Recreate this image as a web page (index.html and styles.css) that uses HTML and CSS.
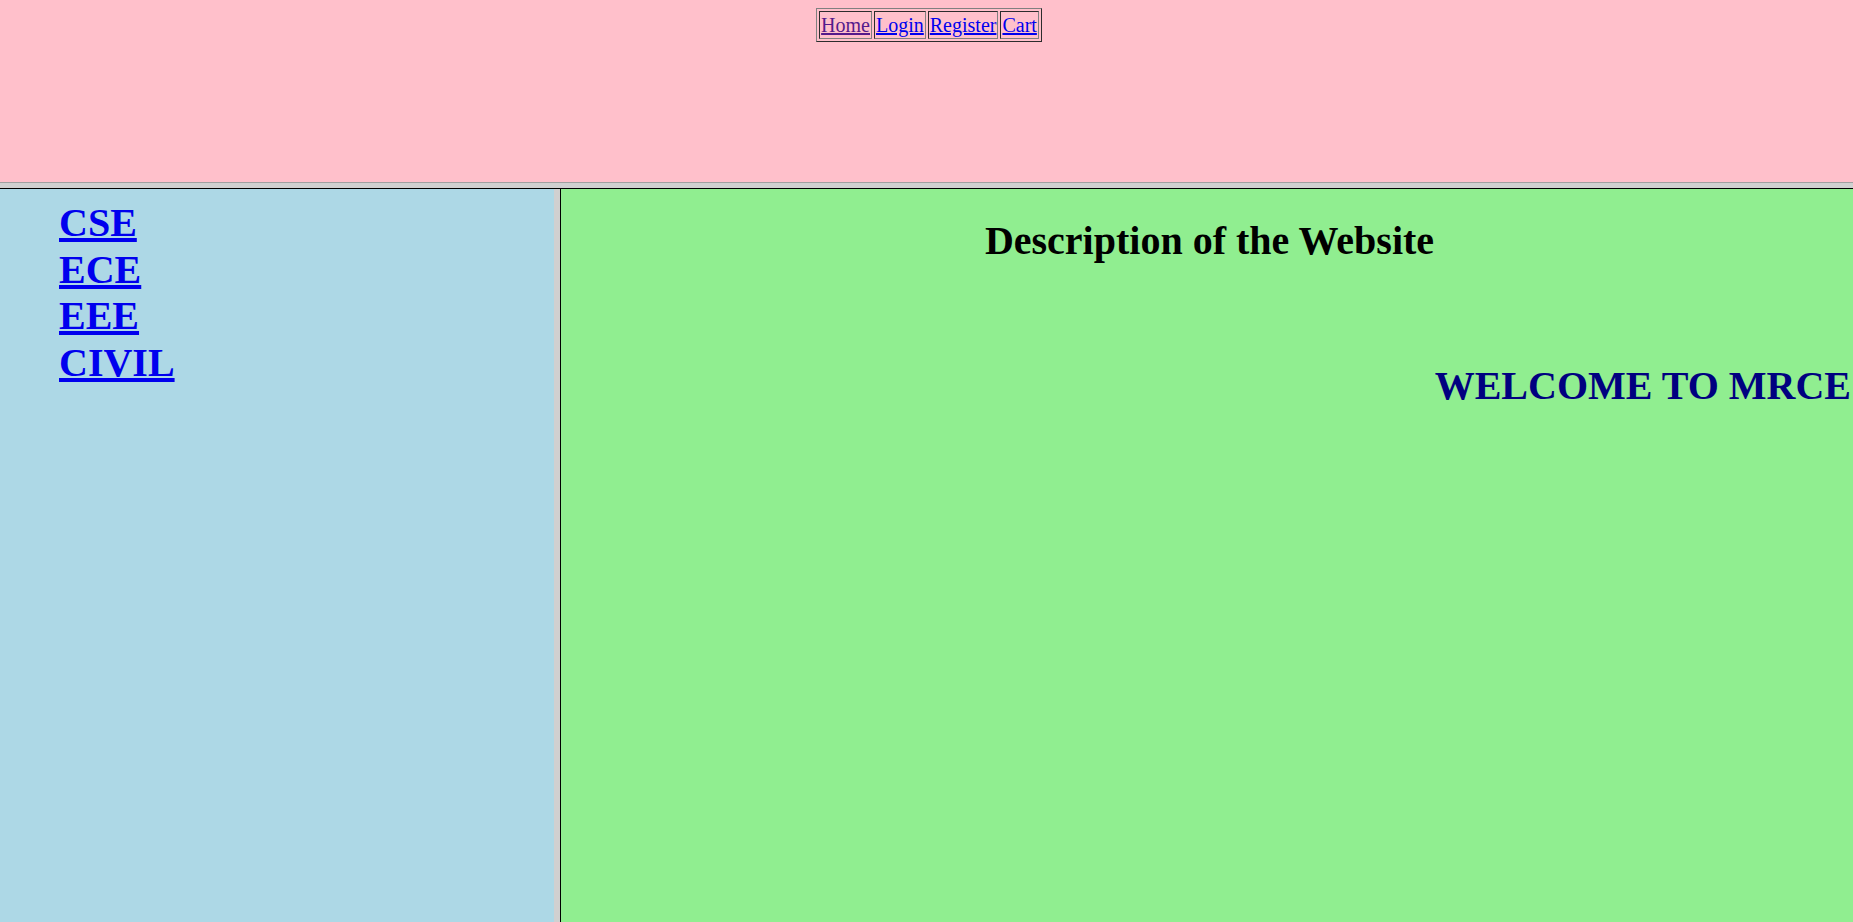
FILE: index.html
```html
<!DOCTYPE html>
<html>
<head>
<meta charset="utf-8">
<title>MRCE</title>
<link rel="stylesheet" href="styles.css">
</head>
<body>
<div class="page">
  <header class="top">
    <table class="nav">
      <tr>
        <td class="nav-cell"><a class="nav-link visited" href="#">Home</a></td>
        <td class="nav-cell"><a class="nav-link" href="#">Login</a></td>
        <td class="nav-cell"><a class="nav-link" href="#">Register</a></td>
        <td class="nav-cell"><a class="nav-link" href="#">Cart</a></td>
      </tr>
    </table>
  </header>
  <div class="hsplit"></div>
  <main class="bottom">
    <aside class="side">
      <ul class="dept">
        <li><a class="dept-link" href="#">CSE</a></li>
        <li><a class="dept-link" href="#">ECE</a></li>
        <li><a class="dept-link" href="#">EEE</a></li>
        <li><a class="dept-link" href="#">CIVIL</a></li>
      </ul>
    </aside>
    <div class="vsplit"></div>
    <section class="content">
      <h1 class="title">Description of the Website</h1>
      <div class="welcome">WELCOME TO MRCE</div>
    </section>
  </main>
</div>
</body>
</html>
```

FILE: styles.css
```css
html, body {
  margin: 0;
  padding: 0;
}
body {
  font-family: "Liberation Serif", "Times New Roman", serif;
  width: 1853px;
  height: 922px;
  overflow: hidden;
}
.page {
  display: flex;
  flex-direction: column;
  height: 922px;
}
.top {
  background: #ffc0cb;
  border-bottom: 1px solid #a0a0a0;
  padding-top: 8px;
  box-sizing: content-box;
  height: 174px;
  display: flex;
  justify-content: center;
  align-items: flex-start;
}
.nav {
  border: 1px outset grey;
  border-spacing: 2px;
  font-size: 20px;
  margin-left: 5px;
}
.nav-cell {
  border: 1px inset grey;
  padding: 1px;
  line-height: 24px;
}
.nav-link {
  color: #0000ee;
  text-decoration: underline;
}
.nav-link.visited {
  color: #551a8b;
}
.hsplit {
  height: 5px;
  background: #d0d0d0;
}
.bottom {
  flex: 1;
  border-top: 1px solid #000;
  display: flex;
  min-height: 0;
}
.side {
  flex: 0 0 554px;
  width: 554px;
  background: #add8e6;
  padding-top: 11px;
  box-sizing: border-box;
}
.dept {
  list-style: none;
  margin: 0;
  padding-left: 59px;
}
.dept li {
  font-size: 40px;
  line-height: 46.5px;
  font-weight: bold;
}
.dept-link {
  color: #0000ee;
  text-decoration: underline;
}
.vsplit {
  flex: 0 0 6px;
  width: 6px;
  background: #d0d0d0;
}
.content {
  flex: 1 1 auto;
  min-width: 0;
  background: #90ee90;
  border-left: 1px solid #000;
  padding-top: 29px;
  padding-left: 5px;
}
.title {
  margin: 0;
  font-size: 40px;
  line-height: 46px;
  font-weight: bold;
  text-align: center;
  color: #000;
}
.welcome {
  margin-top: 99px;
  font-size: 40px;
  line-height: 46px;
  font-weight: bold;
  color: #000080;
  text-align: right;
  padding-right: 2px;
  white-space: nowrap;
}
```
